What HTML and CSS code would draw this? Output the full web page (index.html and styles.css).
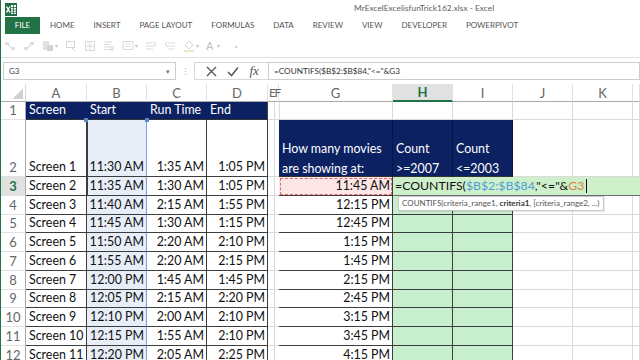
FILE: index.html
```html
<!DOCTYPE html>
<html>
	<head>
		<meta charset="UTF-8">
		<title>MrExcelExcelisfunTrick162.xlsx - Excel</title>
		<link rel="stylesheet" href="styles.css">
	</head>
	<body>
		<div class="app">
			<div class="titlebar">
				<svg class="logo" width="12" height="13" viewBox="0 0 12 13">
					<rect x="0" y="0" width="12" height="13" fill="#1f6e43"/>
					<rect x="6" y="2" width="5" height="9" fill="#fff"/>
					<path d="M6 4.5h5M6 7h5M6 9.3h5M8.5 2v9" stroke="#1f6e43" stroke-width="0.8"/>
					<path d="M1.5 3.5l3.5 6M5 3.5l-3.5 6" stroke="#fff" stroke-width="1.4"/>
				</svg>
				<span class="title">MrExcelExcelisfunTrick162.xlsx - Excel</span>
			</div>
			<ul class="tabs">
				<li class="file">FILE</li>
				<li class="home">HOME</li>
				<li>INSERT</li>
				<li>PAGE LAYOUT</li>
				<li>FORMULAS</li>
				<li>DATA</li>
				<li>REVIEW</li>
				<li>VIEW</li>
				<li>DEVELOPER</li>
				<li>POWERPIVOT</li>
			</ul>
			<div class="ribbon">
				<svg class="ri" viewBox="0 0 12 12"><rect x="1" y="2" width="4" height="3" fill="#c9c9c9"/><rect x="7" y="7" width="4" height="3" fill="#c9c9c9"/><path d="M4 5l4 3" stroke="#9ab6d6"/></svg>
				<svg class="ri" viewBox="0 0 12 12"><rect x="7" y="2" width="4" height="3" fill="#c9c9c9"/><rect x="1" y="7" width="4" height="3" fill="#c9c9c9"/><path d="M8 5l-4 3" stroke="#9ab6d6"/></svg>
				<span class="rc"><svg class="ri" viewBox="0 0 12 12"><rect x="1" y="1" width="6" height="9" fill="#cfcfcf"/><rect x="5" y="5" width="6" height="6" fill="#b9b9b9"/></svg><i>▾</i></span>
				<svg class="ri" viewBox="0 0 12 12"><rect x="1.5" y="1.5" width="8" height="6" fill="none" stroke="#bdbdbd"/><path d="M7 8l3 3" stroke="#b0b0b0"/></svg>
				<svg class="ri" viewBox="0 0 12 12"><rect x="1.5" y="1.5" width="9" height="9" fill="none" stroke="#c2c2c2"/><path d="M6 1.5v9M1.5 6h9" stroke="#c2c2c2"/></svg>
				<svg class="ri" viewBox="0 0 12 12"><path d="M1 2h8M1 4.5h6M1 7h8M1 9.5h6" stroke="#c2c2c2"/><rect x="7" y="6" width="4" height="5" fill="#d8d8d8"/></svg>
				<span class="rc"><svg class="ri" viewBox="0 0 12 12"><rect x="1" y="1.5" width="10" height="8" fill="none" stroke="#bdbdbd"/><path d="M3 4h6M3 6.5h6" stroke="#c9c9c9"/></svg><i>▾</i></span>
				<svg class="ri" viewBox="0 0 12 12"><path d="M1 3h7M1 6h9M1 9h7" stroke="#c5c5c5"/><path d="M9 2l2 2-2 2" fill="none" stroke="#aab9cc"/></svg>
				<svg class="ri" viewBox="0 0 12 12"><path d="M4 3h7M2 6h9M4 9h7" stroke="#c5c5c5"/><path d="M3 2l-2 2 2 2" fill="none" stroke="#aab9cc"/></svg>
				<span class="rc"><svg class="ri" viewBox="0 0 12 12"><path d="M6 1l4 4-4 4-4-4z" fill="none" stroke="#bdbdbd"/><rect x="1" y="10" width="10" height="2" fill="#e6d7a6"/></svg><i>▾</i></span>
				<span class="rc"><span class="ra">A</span><i>▾</i></span>
				<span class="rdot">▪</span>
			</div>
			<div class="fbar">
				<div class="namebox"><span>G3</span><i>▾</i></div>
				<span class="grip">⋮</span>
				<div class="fbtns">
					<svg width="11" height="11" viewBox="0 0 11 11"><path d="M1 1l9 9M10 1l-9 9" stroke="#5a5a5a" stroke-width="1.4"/></svg>
					<svg width="12" height="11" viewBox="0 0 12 11"><path d="M1 6l3.5 3.5L11 1.5" fill="none" stroke="#5a5a5a" stroke-width="1.6"/></svg>
					<span class="fx">fx</span>
				</div>
				<div class="finput">=COUNTIFS($B$2:$B$84,"&lt;="&amp;G3</div>
			</div>
			<div class="sheet">
				<div class="corner"></div><div class="ch">A</div><div class="ch">B</div><div class="ch">C</div><div class="ch">D</div><div class="ch ef">EF</div><div class="ch">G</div><div class="ch act">H</div><div class="ch">I</div><div class="ch">J</div><div class="ch">K</div><div class="ch"></div>

				<div class="rh">1</div><div class="hd">Screen</div><div class="hd">Start</div><div class="hd">Run Time</div><div class="hd hd-end">End</div><div></div><div></div><div></div><div></div><div></div><div></div><div></div><div></div>

				<div class="rh">2</div><div class="t">Screen 1</div><div class="t b r"><span class="hdl hdl-l"></span><span class="hdl hdl-r"></span>11:30 AM</div><div class="t r">1:35 AM</div><div class="t r">1:05 PM</div><div></div><div class="fe"></div><div class="box">How many movies<br>are showing at:</div><div class="box">Count<br>&gt;=2007</div><div class="box">Count<br>&lt;=2003</div><div></div><div></div><div></div>

				<div class="rh act">3</div><div class="t">Screen 2</div><div class="t b r">11:35 AM</div><div class="t r">1:30 AM</div><div class="t r">1:05 PM</div><div></div><div class="fe"></div><div class="t g ref r">11:45 AM</div><div class="edit"><span class="fn">=COUNTIFS(</span><span class="rb">$B$2:$B$84</span><span class="fn">,"&lt;="&amp;</span><span class="ro">G3</span><span class="caret"></span><div class="tip">COUNTIFS(criteria_range1, <b>criteria1</b>, [criteria_range2, ...)</div></div>

				<div class="rh">4</div><div class="t">Screen 3</div><div class="t b r">11:40 AM</div><div class="t r">2:15 AM</div><div class="t r">1:55 PM</div><div></div><div class="fe"></div><div class="t g r">12:15 PM</div><div class="t gr"></div><div class="t gr"></div><div></div><div></div><div></div>

				<div class="rh">5</div><div class="t">Screen 4</div><div class="t b r">11:45 AM</div><div class="t r">1:30 AM</div><div class="t r">1:15 PM</div><div></div><div class="fe"></div><div class="t g r">12:45 PM</div><div class="t gr"></div><div class="t gr"></div><div></div><div></div><div></div>

				<div class="rh">6</div><div class="t">Screen 5</div><div class="t b r">11:50 AM</div><div class="t r">2:20 AM</div><div class="t r">2:10 PM</div><div></div><div class="fe"></div><div class="t g r">1:15 PM</div><div class="t gr"></div><div class="t gr"></div><div></div><div></div><div></div>

				<div class="rh">7</div><div class="t">Screen 6</div><div class="t b r">11:55 AM</div><div class="t r">2:20 AM</div><div class="t r">2:15 PM</div><div></div><div class="fe"></div><div class="t g r">1:45 PM</div><div class="t gr"></div><div class="t gr"></div><div></div><div></div><div></div>

				<div class="rh">8</div><div class="t">Screen 7</div><div class="t b r">12:00 PM</div><div class="t r">1:45 AM</div><div class="t r">1:45 PM</div><div></div><div class="fe"></div><div class="t g r">2:15 PM</div><div class="t gr"></div><div class="t gr"></div><div></div><div></div><div></div>

				<div class="rh">9</div><div class="t">Screen 8</div><div class="t b r">12:05 PM</div><div class="t r">2:15 AM</div><div class="t r">2:20 PM</div><div></div><div class="fe"></div><div class="t g r">2:45 PM</div><div class="t gr"></div><div class="t gr"></div><div></div><div></div><div></div>

				<div class="rh">10</div><div class="t">Screen 9</div><div class="t b r">12:10 PM</div><div class="t r">2:00 AM</div><div class="t r">2:10 PM</div><div></div><div class="fe"></div><div class="t g r">3:15 PM</div><div class="t gr"></div><div class="t gr"></div><div></div><div></div><div></div>

				<div class="rh">11</div><div class="t">Screen 10</div><div class="t b r">12:15 PM</div><div class="t r">1:55 AM</div><div class="t r">2:10 PM</div><div></div><div class="fe"></div><div class="t g r">3:45 PM</div><div class="t gr"></div><div class="t gr"></div><div></div><div></div><div></div>

				<div class="rh">12</div><div class="t">Screen 11</div><div class="t b r">12:20 PM</div><div class="t r">2:05 AM</div><div class="t r">2:25 PM</div><div></div><div class="fe"></div><div class="t g r">4:15 PM</div><div class="t gr"></div><div class="t gr"></div><div></div><div></div><div></div>
			</div>
		</div>
	</body>
</html>
```

FILE: styles.css
```css
*{
	padding: 0;
	margin: 0;
	box-sizing: border-box;
}
body{
	background: #fff;
	font-family: Lato, "Liberation Sans", sans-serif;
	overflow: hidden;
}
.app{
	width: 640px;
	height: 360px;
	border-left: 1px solid #217346;
	overflow: hidden;
}
.titlebar{
	height: 16px;
	display: flex;
	align-items: flex-start;
	padding-left: 4px;
}
.titlebar .logo{
	margin-top: 3px;
	position: relative;
	z-index: 1;
}
.titlebar .title{
	margin-left: 337px;
	margin-top: 3px;
	font-size: 8.4px;
	color: #5e5e5e;
}
.tabs{
	list-style: none;
	display: flex;
	height: 18px;
	align-items: center;
	padding-left: 4px;
	font-size: 8px;
	color: #555;
}
.tabs li{
	margin-left: 19px;
	line-height: 17px;
}
.tabs li.file{
	margin-left: 0;
	width: 35px;
	height: 17px;
	background: #217346;
	color: #fff;
	text-align: center;
	margin-top: 1px;
}
.tabs li.home{
	margin-left: 10px;
}
.ribbon{
	height: 24px;
	display: flex;
	align-items: center;
	gap: 7px;
	padding-left: 3px;
	border-bottom: 1px solid #e2e2e2;
}
.ri{
	width: 12px;
	height: 12px;
	opacity: 0.6;
}
.rc{
	display: flex;
	align-items: center;
}
.rc i{
	font-style: normal;
	font-size: 6px;
	color: #c2c2c2;
	margin-left: 1px;
}
.ra{
	font-size: 11px;
	color: #c0c0c0;
	width: 10px;
}
.rdot{
	font-size: 7px;
	color: #cccccc;
	margin-left: 8px;
}
.fbar{
	height: 26px;
	display: flex;
	align-items: center;
	padding-left: 2px;
}
.namebox{
	width: 173px;
	height: 18px;
	border: 1px solid #cdcdcd;
	display: flex;
	align-items: center;
	justify-content: space-between;
	padding: 0 5px 0 5px;
	font-size: 8px;
	color: #444;
}
.namebox i{
	font-style: normal;
	font-size: 7px;
	color: #777;
}
.grip{
	width: 18px;
	text-align: center;
	font-size: 9px;
	color: #b0b0b0;
}
.fbtns{
	width: 74px;
	height: 18px;
	border: 1px solid #d8d8d8;
	border-right: none;
	display: flex;
	align-items: center;
	justify-content: space-around;
	padding: 0 4px 0 6px;
}
.fx{
	font-family: "Liberation Serif", serif;
	font-style: italic;
	font-size: 13px;
	color: #555;
}
.finput{
	flex: 1;
	height: 18px;
	border: 1px solid #cdcdcd;
	font-size: 8.2px;
	color: #333;
	padding-left: 5px;
	line-height: 16px;
}
.sheet{
	display: grid;
	grid-template-columns: 25px 61px 60px 60px 61px 5px 6px 114px 60px 60px 60px 60px 7px;
	grid-template-rows: 18px 18px 57px repeat(10, 18.75px);
	font-size: 12.4px;
	color: #111;
}
.sheet > div{
	border-right: 1px solid #dadada;
	border-bottom: 1px solid #dadada;
	padding: 0 3px;
	white-space: nowrap;
	display: flex;
	align-items: flex-end;
	line-height: 18px;
	position: relative;
}
.sheet > div.corner{
	border-bottom-color: #ababab;
	background: linear-gradient(135deg, transparent 50%, #cfcfcf 50%) no-repeat right 2px bottom 2px / 10px 10px;
}
.sheet > div.ch{
	justify-content: center;
	align-items: center;
	font-size: 13px;
	color: #666;
	border-bottom-color: #ababab;
	border-right-color: #e1e1e1;
}
.sheet > div.ch.ef{
	grid-column: span 2;
	letter-spacing: -1.5px;
	font-size: 12px;
	justify-content: flex-start;
	padding-left: 1px;
}
.sheet > div.ch.act{
	background: #e1e1e1;
	color: #217346;
	font-weight: bold;
	border-bottom: 2px solid #217346;
}
.sheet > div.rh{
	justify-content: center;
	color: #666;
	font-size: 13px;
	padding: 0;
	border-right-color: #ababab;
	border-bottom-color: #e1e1e1;
}
.sheet > div.rh.act{
	background: #e1e1e1;
	color: #217346;
	font-weight: bold;
}
.sheet > div.hd{
	background: #0c2161;
	color: #fff;
	border-right-color: #0c2161;
	border-bottom-color: #333;
}
.sheet > div.hd-end{
	border-right-color: #444;
}
.sheet > div.t{
	border-right-color: #3d3d3d;
	border-bottom-color: #3d3d3d;
}
.sheet > div.t:nth-child(13n+2){
	box-shadow: inset 1px 0 #3d3d3d;
	border-right-color: #7c9fd9;
}
.sheet > div.r{
	justify-content: flex-end;
	padding-right: 2px;
}
.sheet > div.b{
	background: #e7eef8;
	border-right-color: #7c9fd9;
}
.hdl{
	position: absolute;
	top: -2px;
	width: 4px;
	height: 4px;
	background: #5b86cf;
}
.hdl-l{
	left: -3px;
}
.hdl-r{
	right: -3px;
}
.sheet > div.fe{
	border-right-color: #3d3d3d;
}
.sheet > div.box{
	display: block;
	background: #0c2161;
	color: #fff;
	padding-top: 19px;
	line-height: 20px;
	border-right-color: #071544;
	border-bottom-color: #333;
}
.sheet > div.g{
	background: #fff;
}
.sheet > div.ref{
	background: #fce6e6;
	outline: 1px dashed #de6b6b;
	outline-offset: -2px;
}
.sheet > div.gr{
	background: #c6efce;
}
.sheet > div.edit{
	grid-column: span 5;
	background: #cdf0cb;
	border-right: none;
	border-bottom-color: #6d6d6d;
	padding-left: 2px;
	font-size: 12.3px;
	z-index: 2;
}
.fn{
	color: #111;
}
.rb{
	color: #4f9cd6;
}
.ro{
	color: #dc8440;
}
.caret{
	display: inline-block;
	width: 1px;
	height: 14px;
	background: #111;
	margin: 0 0 2px 2px;
}
.tip{
	position: absolute;
	left: 5px;
	top: 19px;
	height: 15px;
	padding: 0 3px;
	background: #fff;
	border: 1px solid #c8c8c8;
	box-shadow: 1px 1px 1px rgba(0,0,0,0.08);
	font-size: 8px;
	line-height: 13px;
	color: #555;
}
.tip b{
	color: #333;
}
```
